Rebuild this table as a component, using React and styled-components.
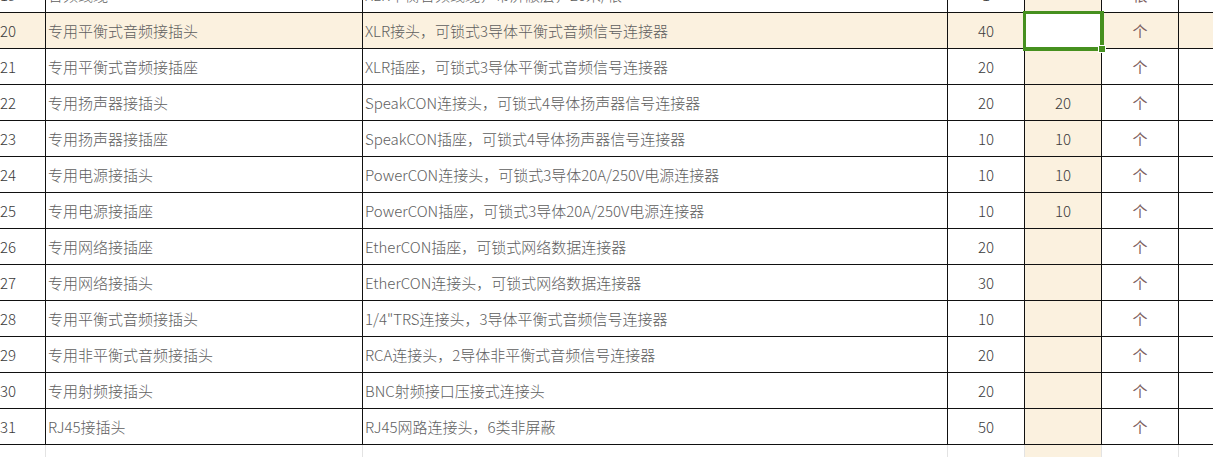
import React from "react";
import styled, { createGlobalStyle } from "styled-components";

const rows = [
  { no: 19, name: "音频线缆", spec: "XLR平衡音频线缆，带屏蔽层，20米/根", qty: "1", unit: "根" },
  { no: 20, name: "专用平衡式音频接插头", spec: "XLR接头，可锁式3导体平衡式音频信号连接器", qty: "40", have: "", unit: "个", selected: true },
  { no: 21, name: "专用平衡式音频接插座", spec: "XLR插座，可锁式3导体平衡式音频信号连接器", qty: "20", unit: "个" },
  { no: 22, name: "专用扬声器接插头", spec: "SpeakCON连接头，可锁式4导体扬声器信号连接器", qty: "20", have: "20", unit: "个" },
  { no: 23, name: "专用扬声器接插座", spec: "SpeakCON插座，可锁式4导体扬声器信号连接器", qty: "10", have: "10", unit: "个" },
  { no: 24, name: "专用电源接插头", spec: "PowerCON连接头，可锁式3导体20A/250V电源连接器", qty: "10", have: "10", unit: "个" },
  { no: 25, name: "专用电源接插座", spec: "PowerCON插座，可锁式3导体20A/250V电源连接器", qty: "10", have: "10", unit: "个" },
  { no: 26, name: "专用网络接插座", spec: "EtherCON插座，可锁式网络数据连接器", qty: "20", unit: "个" },
  { no: 27, name: "专用网络接插头", spec: "EtherCON连接头，可锁式网络数据连接器", qty: "30", unit: "个" },
  { no: 28, name: "专用平衡式音频接插头", spec: "1/4\"TRS连接头，3导体平衡式音频信号连接器", qty: "10", unit: "个" },
  { no: 29, name: "专用非平衡式音频接插头", spec: "RCA连接头，2导体非平衡式音频信号连接器", qty: "20", unit: "个" },
  { no: 30, name: "专用射频接插头", spec: "BNC射频接口压接式连接头", qty: "20", unit: "个" },
  { no: 31, name: "RJ45接插头", spec: "RJ45网路连接头，6类非屏蔽", qty: "50", unit: "个" },
];

export default function App() {
  return (
    <>
      <GlobalStyle />
      <Viewport>
        <Sheet>
          {rows.map((r) => (
            <Row key={r.no} $selected={r.selected}>
              <NumCell>{r.no}</NumCell>
              <TextCell>{r.name}</TextCell>
              <TextCell>{r.spec}</TextCell>
              <CenterCell>{r.qty}</CenterCell>
              <ActiveCol $active={r.selected}>
                {r.have}
                {r.selected && <FillHandle />}
              </ActiveCol>
              <UnitCell>{r.unit}</UnitCell>
              <BlankCell />
            </Row>
          ))}
          <Row $empty>
            <NumCell />
            <TextCell />
            <TextCell />
            <CenterCell />
            <ActiveCol />
            <UnitCell />
            <BlankCell />
          </Row>
        </Sheet>
      </Viewport>
    </>
  );
}

const GlobalStyle = createGlobalStyle`
  html, body {
    margin: 0;
    padding: 0;
    background: #ffffff;
    overflow: hidden;
  }
  body {
    font-family: "Noto Sans CJK SC", "Noto Sans", sans-serif;
  }
`;

const cream = "#fbf1df";
const green = "#46901f";

const Viewport = styled.div`
  width: 1213px;
  height: 457px;
  overflow: hidden;
`;

/* scrolled: row 19 only shows its bottom 13px */
const Sheet = styled.div`
  margin-top: -23px;
  display: flex;
  flex-direction: column;
`;

const Row = styled.div`
  display: grid;
  grid-template-columns: 46px 317px 585px 77px 77px 77px 1fr;
  height: 36px;
  background: ${(p) => (p.$selected ? cream : "#ffffff")};
  --line: ${(p) => (p.$empty ? "#e3e3e3" : "#111111")};
  font-size: 15px;
  font-weight: 300;
  color: #5e5e5e;
`;

const Cell = styled.div`
  position: relative;
  display: flex;
  align-items: center;
  border-bottom: 1px solid var(--line);
  border-right: 1px solid var(--line);
  white-space: nowrap;
  overflow: hidden;
  line-height: 1;
`;

const NumCell = styled(Cell)`
  color: #3a3a3a;
`;

const TextCell = styled(Cell)`
  padding-left: 2px;
`;

const CenterCell = styled(Cell)`
  justify-content: center;
  color: #3a3a3a;
`;

const ActiveCol = styled(Cell)`
  justify-content: center;
  color: #3a3a3a;
  overflow: visible;
  background: ${(p) => (p.$active ? "#ffffff" : cream)};
  ${(p) =>
    p.$active &&
    `
    z-index: 2;
    border-color: ${green};
    box-shadow: 0 0 0 2px ${green}, inset 0 0 0 1px ${green};
  `}
`;

const FillHandle = styled.span`
  position: absolute;
  right: -4px;
  bottom: -4px;
  width: 6px;
  height: 6px;
  background: ${green};
  outline: 1px solid #ffffff;
`;

const UnitCell = styled(Cell)`
  justify-content: center;
  font-weight: 400;
  color: #7d5f5f;
`;

const BlankCell = styled.div`
  border-bottom: 1px solid var(--line);
`;
